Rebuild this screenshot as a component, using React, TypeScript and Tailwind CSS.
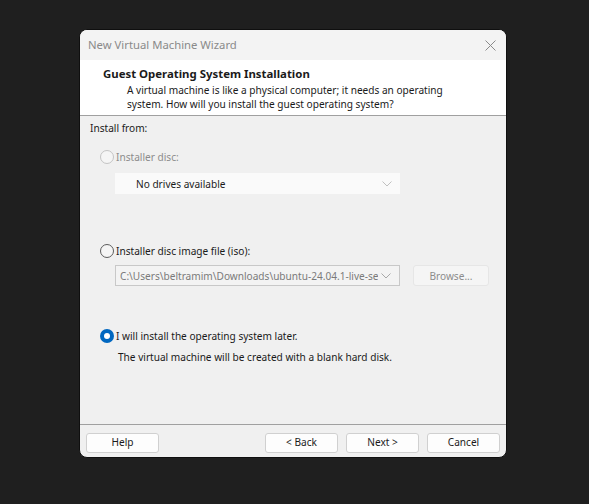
import React from "react";

function Radio({ checked, disabled }: { checked?: boolean; disabled?: boolean }) {
  if (checked) {
    return (
      <span className="flex h-[14px] w-[14px] shrink-0 items-center justify-center rounded-full bg-[#0067c0]">
        <span className="h-[6px] w-[6px] rounded-full bg-white" />
      </span>
    );
  }
  return (
    <span
      className={`h-[14px] w-[14px] shrink-0 rounded-full border bg-[#f5f5f5] ${disabled ? "border-[#c4c4c4]" : "border-[#5c5c5c]"}`}
    />
  );
}

function Chevron({ color }: { color: string }) {
  return (
    <svg width="10" height="6" viewBox="0 0 10 6" fill="none">
      <path d="M0.5 0.5 L5 5 L9.5 0.5" stroke={color} strokeWidth="1" />
    </svg>
  );
}

function Btn({ label }: { label: string }) {
  return (
    <div className="flex h-[20px] w-[73px] items-center justify-center rounded-[3px] border border-[#d0d0d0] bg-[#fdfdfd] text-[#1a1a1a]">
      {label}
    </div>
  );
}

export default function App() {
  return (
    <div
      className="flex h-[504px] w-[589px] items-start bg-[#1f1f1f] pl-[79px] pt-[29px]"
      style={{ fontFamily: '"Noto Sans", "Open Sans", sans-serif' }}
    >
      <div className="flex h-[429px] w-[428px] flex-col overflow-hidden rounded-[8px] border border-[#0f0f0f] bg-[#f0f0f0] text-[10.1px]">
        {/* title bar */}
        <div className="flex h-[30px] shrink-0 items-center justify-between bg-[#f3f3f3] pl-[8px] pr-[10px]">
          <span className="text-[11.3px] text-[#8a8a8a]">New Virtual Machine Wizard</span>
          <svg width="11" height="11" viewBox="0 0 11 11">
            <path d="M0.5 0.5 L10.5 10.5 M10.5 0.5 L0.5 10.5" stroke="#8a8a8a" strokeWidth="1" />
          </svg>
        </div>

        {/* header */}
        <div className="h-[56px] shrink-0 border-b border-[#a0a0a0] bg-white pl-[23px] pt-[7px] leading-[14px]">
          <div className="text-[11.4px] font-bold text-[#1a1a1a]">Guest Operating System Installation</div>
          <div className="mt-[2px] pl-[24px] text-[#1a1a1a]">
            <div>A virtual machine is like a physical computer; it needs an operating</div>
            <div>system. How will you install the guest operating system?</div>
          </div>
        </div>

        {/* body */}
        <div className="flex flex-1 flex-col px-[10px] pt-[4px] leading-[16px] text-[#1a1a1a]">
          <div>Install from:</div>

          <div className="mt-[13px] flex items-center gap-[2px] pl-[10px] text-[#8c8c8c]">
            <Radio disabled />
            <span>Installer disc:</span>
          </div>
          <div className="ml-[25px] mt-[8px] flex h-[21px] w-[285px] items-center justify-between bg-[#fafafa] pl-[21px] pr-[8px]">
            <span>No drives available</span>
            <Chevron color="#c0c0c0" />
          </div>

          <div className="mt-[49px] flex items-center gap-[2px] pl-[10px]">
            <Radio />
            <span>Installer disc image file (iso):</span>
          </div>
          <div className="mt-[6px] flex items-center gap-[13px] pl-[25px]">
            <div className="flex h-[21px] w-[285px] items-center justify-between border border-[#c8c8c8] bg-[#f3f3f3] pl-[4px] pr-[8px]">
              <span className="w-[258px] overflow-hidden whitespace-nowrap text-[#7a7a7a]">
                C:\Users\beltramim\Downloads\ubuntu-24.04.1-live-server-amd64.iso
              </span>
              <Chevron color="#a8a8a8" />
            </div>
            <div className="flex h-[21px] w-[76px] items-center justify-center rounded-[3px] border border-[#e6e6e6] bg-[#f5f5f5] text-[#8c8c8c]">
              Browse...
            </div>
          </div>

          <div className="mt-[42px] flex items-center gap-[2px] pl-[10px]">
            <Radio checked />
            <span>I will install the operating system later.</span>
          </div>
          <div className="mt-[5px] pl-[28px]">The virtual machine will be created with a blank hard disk.</div>
        </div>

        {/* footer */}
        <div className="flex h-[33px] shrink-0 items-start justify-between border-t border-[#a0a0a0] px-[6px] pt-[8px]">
          <Btn label="Help" />
          <div className="flex gap-[8px]">
            <Btn label="< Back" />
            <Btn label="Next >" />
            <Btn label="Cancel" />
          </div>
        </div>
      </div>
    </div>
  );
}
